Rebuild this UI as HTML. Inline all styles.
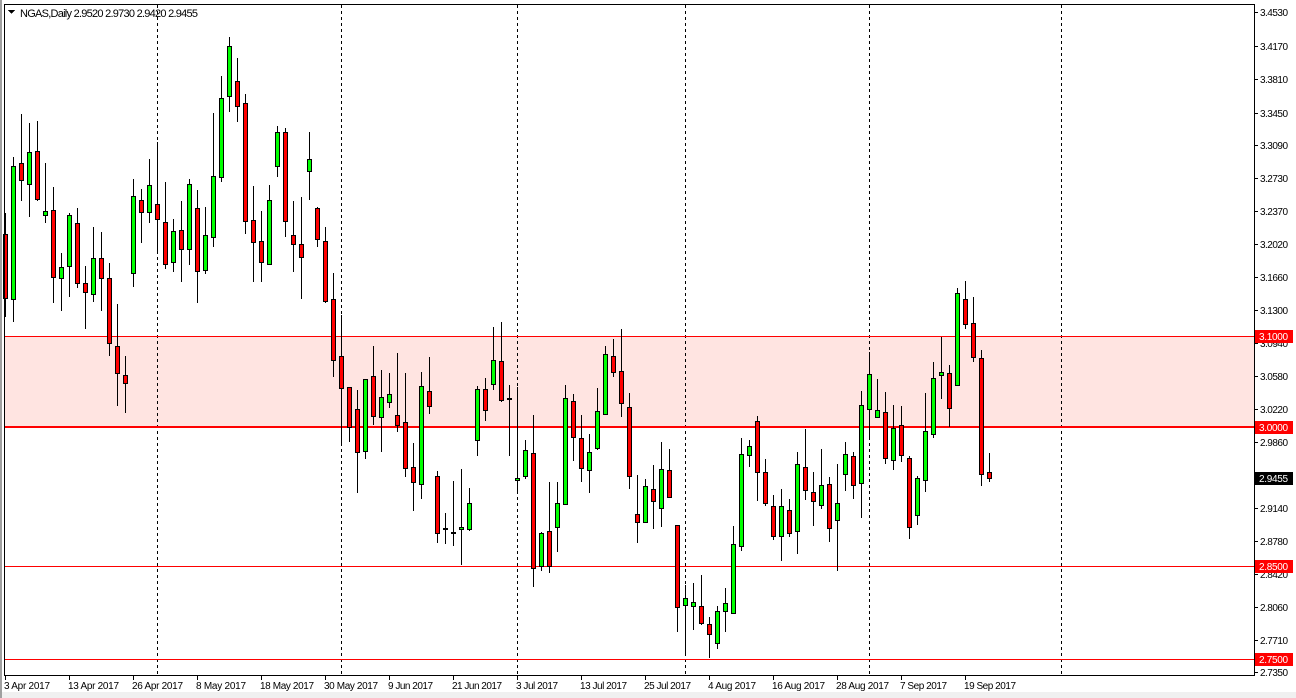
<!DOCTYPE html>
<html><head><meta charset="utf-8"><style>
html,body{margin:0;padding:0;background:#fff;width:1296px;height:698px;overflow:hidden}
svg{display:block;font-family:"Liberation Sans",sans-serif;font-size:11px}
.ax{font-size:10px}
</style></head><body>
<svg width="1296" height="698" viewBox="0 0 1296 698" xmlns="http://www.w3.org/2000/svg" shape-rendering="crispEdges">
<rect x="0" y="0" width="1296" height="698" fill="#fff"/>
<rect x="0" y="692" width="1296" height="6" fill="#f0f0f0"/>
<rect x="0" y="0" width="2" height="698" fill="#a0a0a0"/>
<rect x="5" y="336" width="1249" height="91" fill="#ffe4e1"/>
<g stroke="#000" stroke-dasharray="3,3">
<line x1="157.5" y1="5" x2="157.5" y2="675"/>
<line x1="341.5" y1="5" x2="341.5" y2="675"/>
<line x1="517.5" y1="5" x2="517.5" y2="675"/>
<line x1="685.5" y1="5" x2="685.5" y2="675"/>
<line x1="869.5" y1="5" x2="869.5" y2="675"/>
<line x1="1061.5" y1="5" x2="1061.5" y2="675"/>
</g>
<g stroke="#ff0000">
<line x1="5" y1="336.5" x2="1254" y2="336.5"/>
<line x1="5" y1="427" x2="1254" y2="427" stroke-width="2"/>
<line x1="5" y1="566.5" x2="1254" y2="566.5"/>
<line x1="5" y1="659.5" x2="1254" y2="659.5"/>
</g>
<path stroke="#000" fill="none" d="
M5.5 213V317M13.5 157V322M21.5 114V201M29.5 123V217M37.5 121V201M45.5 163V223M53.5 187V303M61.5 253V311M69.5 213V297M77.5 208V288
M85.5 266V329M93.5 227V302M101.5 232V311M109.5 263V356M117.5 304V406M125.5 356V413M133.5 179V287M141.5 189V243M149.5 159V223M157.5 142V253
M165.5 182V269M173.5 219V272M181.5 201V282M189.5 179V265M197.5 190V303M205.5 207V274M213.5 113V247M221.5 76V182M229.5 37V112M237.5 58V122
M245.5 94V234M253.5 186V282M261.5 211V282M269.5 185V265M277.5 126V177M285.5 128V237M293.5 201V272M301.5 197V299M309.5 132V200M317.5 207V247
M325.5 227V303M333.5 273V377M341.5 315V445M349.5 387V442M357.5 390V493M365.5 379V459M373.5 346V425M381.5 370V452M389.5 373V408M397.5 353V432
M405.5 373V477M413.5 443V511M421.5 372V499M429.5 357V414M437.5 471V543M445.5 513V544M453.5 481V546M461.5 469V565M469.5 488V531M477.5 386V456
M485.5 378V421M493.5 327V390M501.5 322V402M509.5 385V456M517.5 387V492M525.5 440V479M533.5 415V587M541.5 532V571M549.5 482V573M557.5 482V552
M565.5 385V504M573.5 394V461M581.5 415V482M589.5 434V493M597.5 388V450M605.5 346V414M613.5 339V377M621.5 329V417M629.5 393V489M637.5 475V543
M645.5 479V522M653.5 465V529M661.5 442V527M669.5 449V498M677.5 525V632M685.5 585V655M693.5 583V630M701.5 575V625M709.5 617V658M717.5 606V649
M725.5 588V632M733.5 526V613M741.5 438V551M749.5 440V467M757.5 416V501M765.5 459V506M773.5 495V540M781.5 489V561M789.5 499V537M797.5 452V554
M805.5 429V500M813.5 472V526M821.5 449V509M829.5 477V542M837.5 464V571M845.5 442V491M853.5 452V499M861.5 391V518M869.5 352V438M877.5 379V417
M885.5 392V464M893.5 405V470M901.5 406V462M909.5 456V539M917.5 476V525M925.5 393V492M933.5 362V438M941.5 337V399M949.5 365V427M957.5 288V385
M965.5 281V329M973.5 297V362M981.5 350V486M989.5 453V482"/>
<g fill="#ff0000" stroke="#000">
<rect x="3.5" y="234.5" width="4" height="64"/>
<rect x="19.5" y="163.5" width="4" height="17"/>
<rect x="35.5" y="151.5" width="4" height="48"/>
<rect x="51.5" y="210.5" width="4" height="67"/>
<rect x="75.5" y="223.5" width="4" height="60"/>
<rect x="83.5" y="283.5" width="4" height="9"/>
<rect x="99.5" y="258.5" width="4" height="20"/>
<rect x="107.5" y="278.5" width="4" height="65"/>
<rect x="115.5" y="346.5" width="4" height="27"/>
<rect x="123.5" y="375.5" width="4" height="8"/>
<rect x="139.5" y="200.5" width="4" height="12"/>
<rect x="155.5" y="204.5" width="4" height="15"/>
<rect x="163.5" y="222.5" width="4" height="42"/>
<rect x="179.5" y="230.5" width="4" height="19"/>
<rect x="195.5" y="208.5" width="4" height="63"/>
<rect x="235.5" y="81.5" width="4" height="25"/>
<rect x="243.5" y="103.5" width="4" height="118"/>
<rect x="251.5" y="220.5" width="4" height="22"/>
<rect x="259.5" y="241.5" width="4" height="21"/>
<rect x="283.5" y="132.5" width="4" height="89"/>
<rect x="291.5" y="235.5" width="4" height="9"/>
<rect x="299.5" y="244.5" width="4" height="13"/>
<rect x="315.5" y="208.5" width="4" height="31"/>
<rect x="323.5" y="241.5" width="4" height="60"/>
<rect x="331.5" y="299.5" width="4" height="61"/>
<rect x="339.5" y="356.5" width="4" height="32"/>
<rect x="347.5" y="387.5" width="4" height="40"/>
<rect x="355.5" y="409.5" width="4" height="43"/>
<rect x="371.5" y="376.5" width="4" height="40"/>
<rect x="395.5" y="415.5" width="4" height="10"/>
<rect x="403.5" y="422.5" width="4" height="46"/>
<rect x="411.5" y="467.5" width="4" height="15"/>
<rect x="427.5" y="391.5" width="4" height="15"/>
<rect x="435.5" y="476.5" width="4" height="57"/>
<rect x="443.5" y="528.5" width="4" height="1"/>
<rect x="451.5" y="532.5" width="4" height="1"/>
<rect x="483.5" y="389.5" width="4" height="21"/>
<rect x="499.5" y="361.5" width="4" height="39"/>
<rect x="507.5" y="398.5" width="4" height="1"/>
<rect x="531.5" y="453.5" width="4" height="115"/>
<rect x="547.5" y="531.5" width="4" height="35"/>
<rect x="571.5" y="401.5" width="4" height="36"/>
<rect x="579.5" y="438.5" width="4" height="30"/>
<rect x="611.5" y="356.5" width="4" height="16"/>
<rect x="619.5" y="371.5" width="4" height="32"/>
<rect x="627.5" y="407.5" width="4" height="69"/>
<rect x="635.5" y="514.5" width="4" height="8"/>
<rect x="651.5" y="489.5" width="4" height="12"/>
<rect x="667.5" y="470.5" width="4" height="27"/>
<rect x="675.5" y="525.5" width="4" height="82"/>
<rect x="699.5" y="606.5" width="4" height="17"/>
<rect x="707.5" y="624.5" width="4" height="10"/>
<rect x="755.5" y="421.5" width="4" height="51"/>
<rect x="763.5" y="472.5" width="4" height="31"/>
<rect x="771.5" y="506.5" width="4" height="30"/>
<rect x="787.5" y="510.5" width="4" height="23"/>
<rect x="803.5" y="467.5" width="4" height="23"/>
<rect x="811.5" y="492.5" width="4" height="9"/>
<rect x="827.5" y="484.5" width="4" height="44"/>
<rect x="851.5" y="456.5" width="4" height="29"/>
<rect x="883.5" y="412.5" width="4" height="46"/>
<rect x="899.5" y="425.5" width="4" height="30"/>
<rect x="907.5" y="458.5" width="4" height="69"/>
<rect x="947.5" y="373.5" width="4" height="35"/>
<rect x="963.5" y="299.5" width="4" height="25"/>
<rect x="971.5" y="323.5" width="4" height="34"/>
<rect x="979.5" y="358.5" width="4" height="116"/>
<rect x="987.5" y="472.5" width="4" height="6"/>
</g>
<g fill="#00ff00" stroke="#000">
<rect x="11.5" y="166.5" width="4" height="133"/>
<rect x="27.5" y="152.5" width="4" height="32"/>
<rect x="43.5" y="211.5" width="4" height="4"/>
<rect x="59.5" y="267.5" width="4" height="11"/>
<rect x="67.5" y="215.5" width="4" height="51"/>
<rect x="91.5" y="258.5" width="4" height="36"/>
<rect x="131.5" y="196.5" width="4" height="77"/>
<rect x="147.5" y="185.5" width="4" height="27"/>
<rect x="171.5" y="231.5" width="4" height="31"/>
<rect x="187.5" y="184.5" width="4" height="65"/>
<rect x="203.5" y="235.5" width="4" height="35"/>
<rect x="211.5" y="176.5" width="4" height="61"/>
<rect x="219.5" y="98.5" width="4" height="79"/>
<rect x="227.5" y="46.5" width="4" height="50"/>
<rect x="267.5" y="200.5" width="4" height="64"/>
<rect x="275.5" y="132.5" width="4" height="34"/>
<rect x="307.5" y="159.5" width="4" height="12"/>
<rect x="363.5" y="379.5" width="4" height="72"/>
<rect x="379.5" y="397.5" width="4" height="20"/>
<rect x="387.5" y="394.5" width="4" height="8"/>
<rect x="419.5" y="386.5" width="4" height="98"/>
<rect x="459.5" y="527.5" width="4" height="2"/>
<rect x="467.5" y="503.5" width="4" height="26"/>
<rect x="475.5" y="389.5" width="4" height="51"/>
<rect x="491.5" y="360.5" width="4" height="24"/>
<rect x="515.5" y="478.5" width="4" height="2"/>
<rect x="523.5" y="450.5" width="4" height="26"/>
<rect x="539.5" y="533.5" width="4" height="33"/>
<rect x="555.5" y="503.5" width="4" height="24"/>
<rect x="563.5" y="398.5" width="4" height="106"/>
<rect x="587.5" y="452.5" width="4" height="18"/>
<rect x="595.5" y="411.5" width="4" height="37"/>
<rect x="603.5" y="354.5" width="4" height="60"/>
<rect x="643.5" y="486.5" width="4" height="36"/>
<rect x="659.5" y="469.5" width="4" height="39"/>
<rect x="683.5" y="598.5" width="4" height="7"/>
<rect x="691.5" y="602.5" width="4" height="4"/>
<rect x="715.5" y="611.5" width="4" height="32"/>
<rect x="723.5" y="603.5" width="4" height="8"/>
<rect x="731.5" y="544.5" width="4" height="69"/>
<rect x="739.5" y="454.5" width="4" height="92"/>
<rect x="747.5" y="446.5" width="4" height="9"/>
<rect x="779.5" y="506.5" width="4" height="30"/>
<rect x="795.5" y="464.5" width="4" height="67"/>
<rect x="819.5" y="485.5" width="4" height="20"/>
<rect x="835.5" y="503.5" width="4" height="17"/>
<rect x="843.5" y="454.5" width="4" height="20"/>
<rect x="859.5" y="405.5" width="4" height="78"/>
<rect x="867.5" y="374.5" width="4" height="35"/>
<rect x="875.5" y="410.5" width="4" height="7"/>
<rect x="891.5" y="428.5" width="4" height="32"/>
<rect x="915.5" y="478.5" width="4" height="37"/>
<rect x="923.5" y="431.5" width="4" height="49"/>
<rect x="931.5" y="378.5" width="4" height="56"/>
<rect x="939.5" y="372.5" width="4" height="3"/>
<rect x="955.5" y="293.5" width="4" height="92"/>
</g>
<g stroke="#000" fill="none">
<line x1="4.5" y1="4" x2="4.5" y2="676"/>
<line x1="4" y1="4.5" x2="1255" y2="4.5"/>
<line x1="1254.5" y1="4" x2="1254.5" y2="676"/>
<line x1="4" y1="675.5" x2="1255" y2="675.5"/>
</g>
<path d="M8 10h7l-3.5 4z" fill="#000"/>
<text x="20" y="17" fill="#000" textLength="178">NGAS,Daily  2.9520 2.9730 2.9420 2.9455</text>
<g stroke="#000">
<path d="M1254 12.5h4M1254 46.5h4M1254 79.5h4M1254 113.5h4M1254 145.5h4M1254 178.5h4M1254 211.5h4M1254 244.5h4M1254 277.5h4M1254 310.5h4M1254 343.5h4M1254 376.5h4M1254 409.5h4M1254 442.5h4M1254 475.5h4M1254 508.5h4M1254 541.5h4M1254 574.5h4M1254 607.5h4M1254 640.5h4M1254 672.5h4"/>
</g>
<g fill="#000" class="ax">
<text x="1260" y="16" textLength="28">3.4530</text>
<text x="1260" y="50" textLength="28">3.4170</text>
<text x="1260" y="83" textLength="28">3.3810</text>
<text x="1260" y="117" textLength="28">3.3450</text>
<text x="1260" y="149" textLength="28">3.3090</text>
<text x="1260" y="182" textLength="28">3.2730</text>
<text x="1260" y="215" textLength="28">3.2370</text>
<text x="1260" y="248" textLength="28">3.2020</text>
<text x="1260" y="281" textLength="28">3.1660</text>
<text x="1260" y="314" textLength="28">3.1300</text>
<text x="1260" y="347" textLength="28">3.0940</text>
<text x="1260" y="380" textLength="28">3.0580</text>
<text x="1260" y="413" textLength="28">3.0220</text>
<text x="1260" y="446" textLength="28">2.9860</text>
<text x="1260" y="479" textLength="28">2.9500</text>
<text x="1260" y="512" textLength="28">2.9140</text>
<text x="1260" y="545" textLength="28">2.8780</text>
<text x="1260" y="578" textLength="28">2.8420</text>
<text x="1260" y="611" textLength="28">2.8060</text>
<text x="1260" y="644" textLength="28">2.7710</text>
<text x="1260" y="676" textLength="28">2.7350</text>
</g>
<g class="ax">
<rect x="1255" y="330" width="38" height="13" fill="#ff0000"/>
<text x="1259" y="340" fill="#fff" textLength="29">3.1000</text>
<rect x="1255" y="421" width="38" height="13" fill="#ff0000"/>
<text x="1259" y="431" fill="#fff" textLength="29">3.0000</text>
<rect x="1255" y="560" width="38" height="13" fill="#ff0000"/>
<text x="1259" y="570" fill="#fff" textLength="29">2.8500</text>
<rect x="1255" y="653" width="38" height="13" fill="#ff0000"/>
<text x="1259" y="663" fill="#fff" textLength="29">2.7500</text>
<rect x="1255" y="472" width="38" height="13" fill="#000"/>
<text x="1259" y="482" fill="#fff" textLength="29">2.9455</text>
</g>
<path stroke="#000" d="M5.5 676v4M69.5 676v4M133.5 676v4M197.5 676v4M261.5 676v4M325.5 676v4M389.5 676v4M453.5 676v4M517.5 676v4M581.5 676v4M645.5 676v4M709.5 676v4M773.5 676v4M837.5 676v4M901.5 676v4M965.5 676v4"/>
<g fill="#000" class="ax">
<text x="4" y="689" textLength="46">3 Apr 2017</text>
<text x="68" y="689" textLength="51">13 Apr 2017</text>
<text x="132" y="689" textLength="51">26 Apr 2017</text>
<text x="196" y="689" textLength="50">8 May 2017</text>
<text x="260" y="689" textLength="54">18 May 2017</text>
<text x="324" y="689" textLength="54">30 May 2017</text>
<text x="388" y="689" textLength="45">9 Jun 2017</text>
<text x="452" y="689" textLength="50">21 Jun 2017</text>
<text x="516" y="689" textLength="42">3 Jul 2017</text>
<text x="580" y="689" textLength="47">13 Jul 2017</text>
<text x="644" y="689" textLength="47">25 Jul 2017</text>
<text x="708" y="689" textLength="48">4 Aug 2017</text>
<text x="772" y="689" textLength="53">16 Aug 2017</text>
<text x="836" y="689" textLength="53">28 Aug 2017</text>
<text x="900" y="689" textLength="47">7 Sep 2017</text>
<text x="964" y="689" textLength="52">19 Sep 2017</text>
</g>
</svg>
</body></html>
